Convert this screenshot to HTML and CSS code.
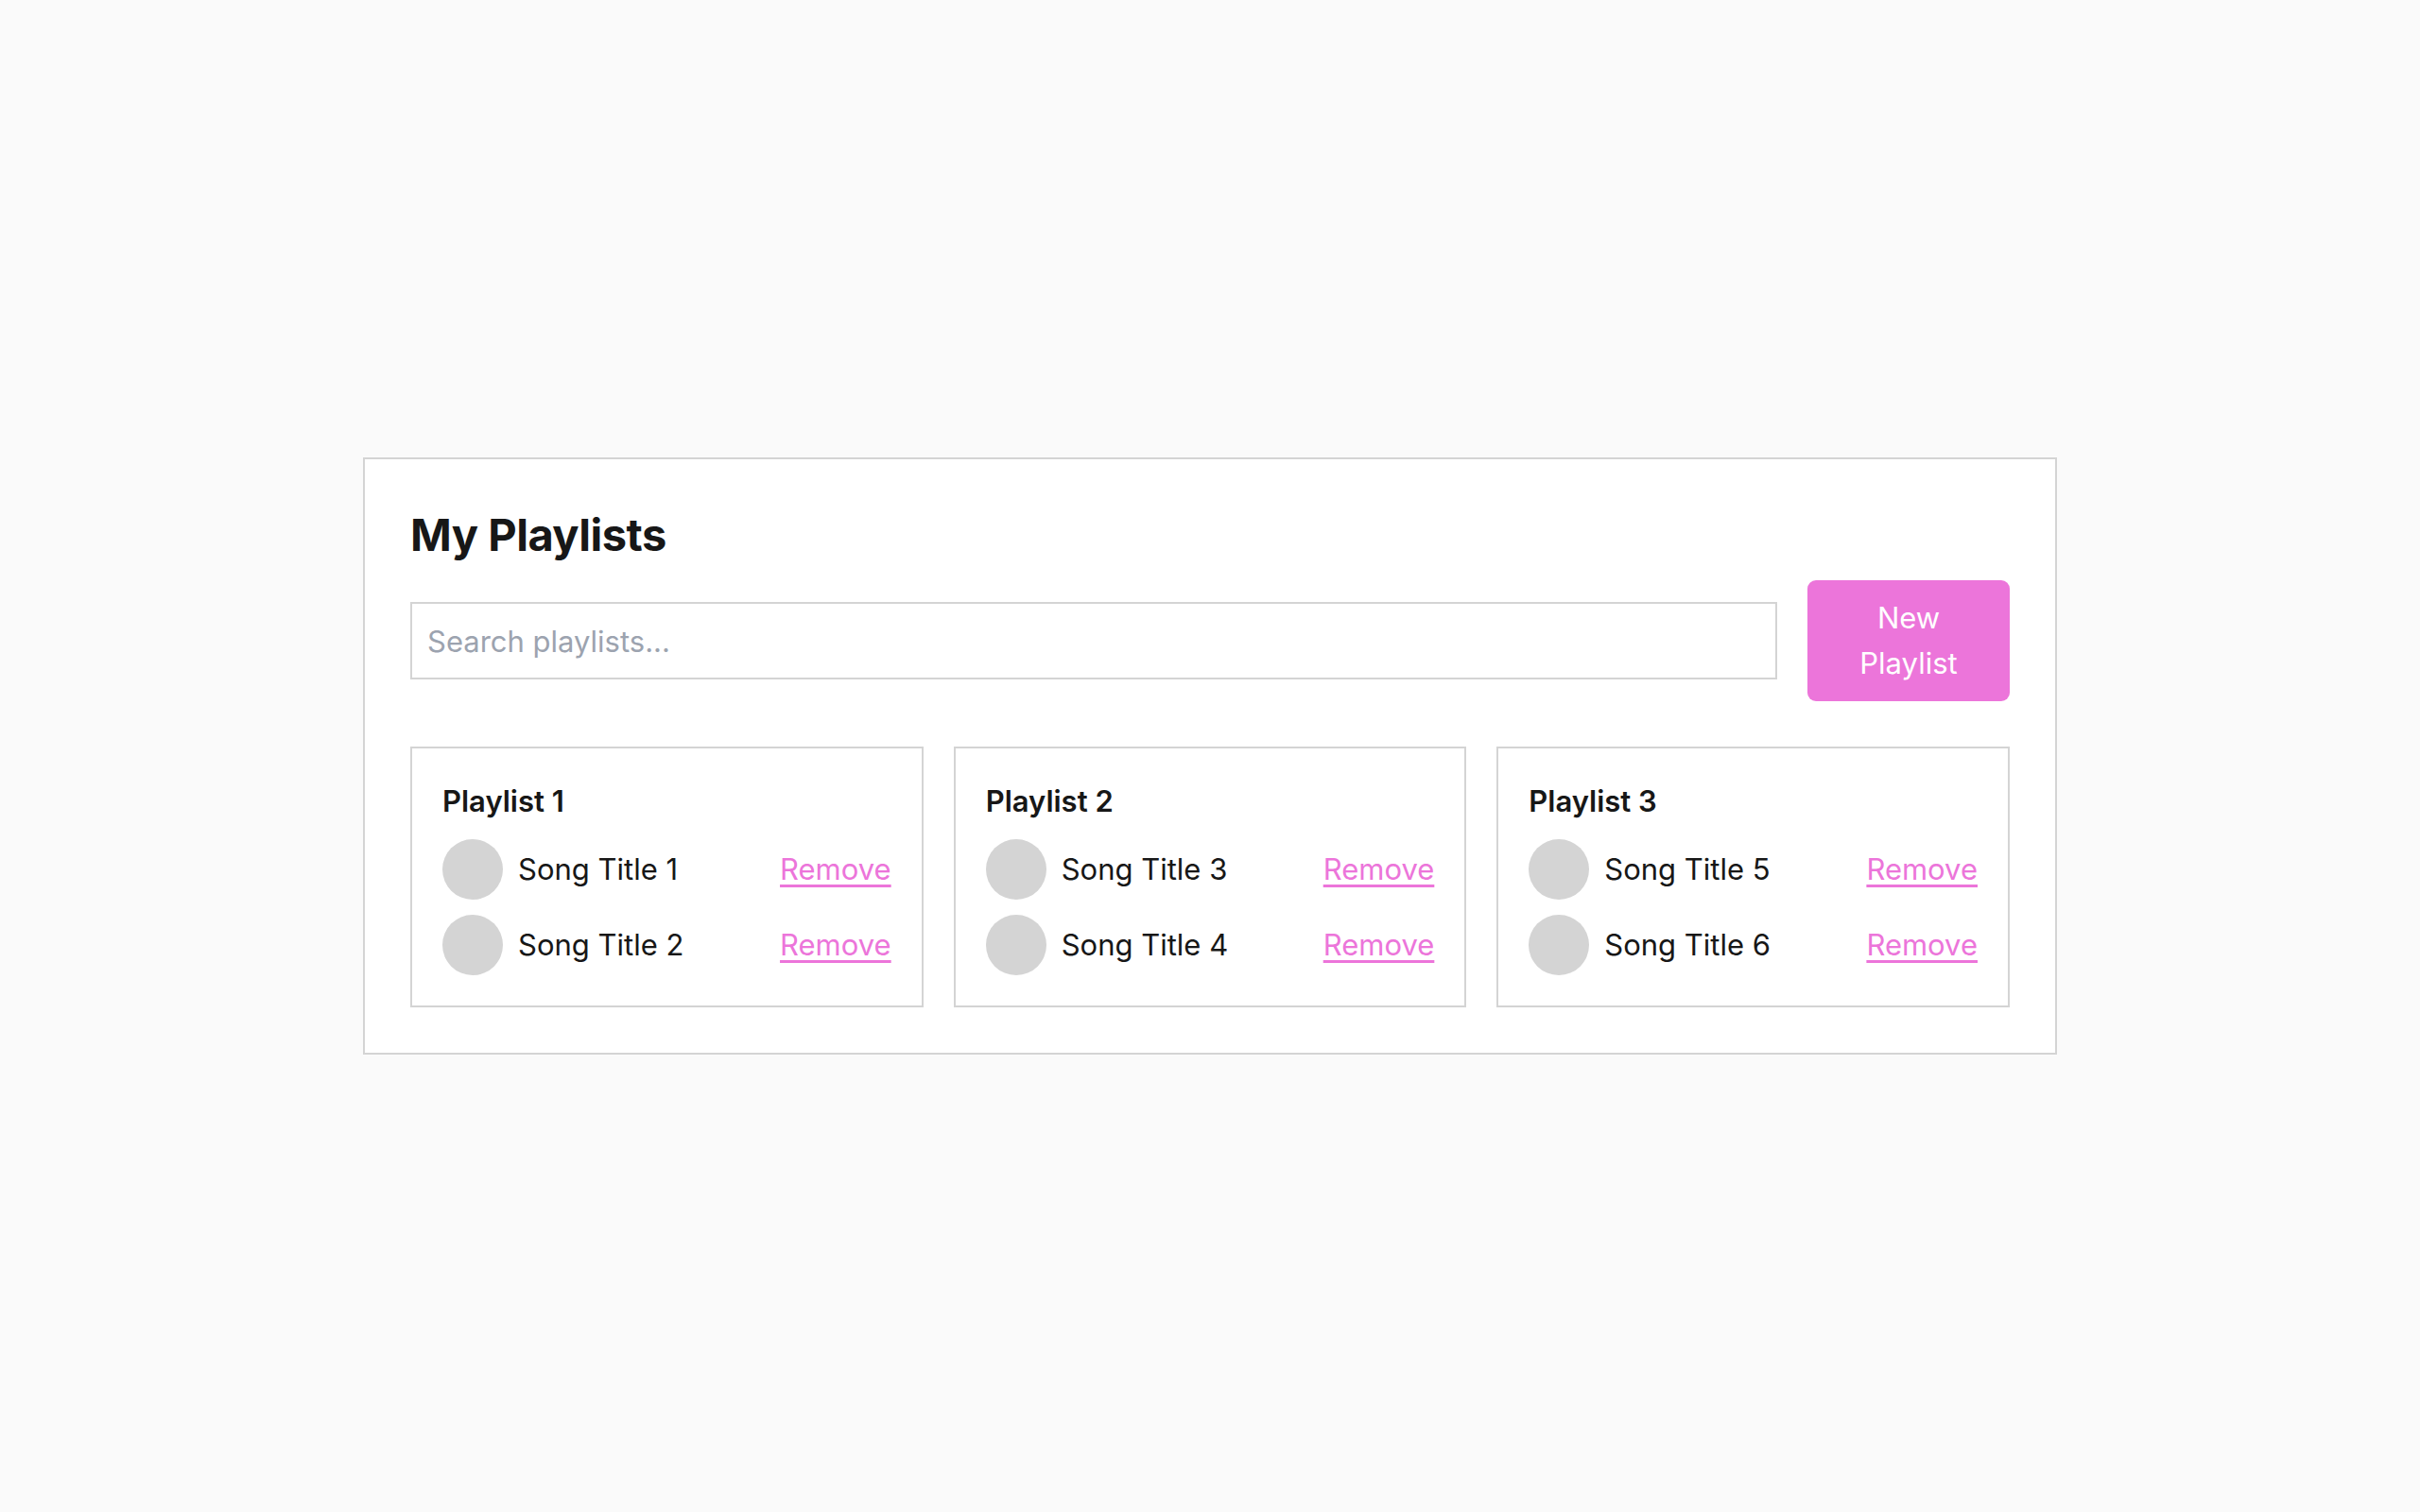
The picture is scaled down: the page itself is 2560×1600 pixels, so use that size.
FILE: index.html
```html
<!DOCTYPE html>
<html lang="en">
<head>
    <meta charset="UTF-8">
    <meta name="viewport" content="width=device-width, initial-scale=1.0">
    <title>My Playlists</title>
    <link rel="stylesheet" href="styles.css">
</head>
<body>
    <div class="panel">
        <h1>My Playlists</h1>

        <div class="toolbar">
            <input type="text" class="search" placeholder="Search playlists...">
            <button type="button" class="new-btn">New Playlist</button>
        </div>

        <div class="playlists">
            <div class="card">
                <h3>Playlist 1</h3>
                <div class="song">
                    <span class="cover"></span>
                    <span class="song-title">Song Title 1</span>
                    <a href="#" class="remove">Remove</a>
                </div>
                <div class="song">
                    <span class="cover"></span>
                    <span class="song-title">Song Title 2</span>
                    <a href="#" class="remove">Remove</a>
                </div>
            </div>
            <div class="card">
                <h3>Playlist 2</h3>
                <div class="song">
                    <span class="cover"></span>
                    <span class="song-title">Song Title 3</span>
                    <a href="#" class="remove">Remove</a>
                </div>
                <div class="song">
                    <span class="cover"></span>
                    <span class="song-title">Song Title 4</span>
                    <a href="#" class="remove">Remove</a>
                </div>
            </div>
            <div class="card">
                <h3>Playlist 3</h3>
                <div class="song">
                    <span class="cover"></span>
                    <span class="song-title">Song Title 5</span>
                    <a href="#" class="remove">Remove</a>
                </div>
                <div class="song">
                    <span class="cover"></span>
                    <span class="song-title">Song Title 6</span>
                    <a href="#" class="remove">Remove</a>
                </div>
            </div>
        </div>
    </div>
</body>
</html>
```

FILE: styles.css
```css
* {
    box-sizing: border-box;
}
body {
    font-family: Inter, "Noto Sans", sans-serif;
    margin: 0;
    padding: 0;
    min-height: 100vh;
    background-color: #fafafa;
    color: #171717;
    display: flex;
    align-items: center;
    justify-content: center;
}
.panel {
    width: 1792px;
    background-color: #fff;
    border: 2px solid #d4d4d4;
    padding: 48px;
}
h1 {
    font-size: 47px;
    line-height: 64px;
    font-weight: 700;
    letter-spacing: -0.5px;
    margin: 0 0 16px;
}
.toolbar {
    display: flex;
    align-items: center;
    gap: 32px;
    margin-bottom: 48px;
}
.search {
    flex: 1;
    height: 82px;
    padding: 0 16px;
    border: 2px solid #d4d4d4;
    border-radius: 0;
    font-family: inherit;
    font-size: 31px;
    color: #171717;
    outline: none;
}
.search::placeholder {
    color: #9ca3af;
}
.new-btn {
    width: 214px;
    padding: 16px 44px;
    background-color: #ec75da;
    color: #fff;
    border: none;
    border-radius: 9px;
    font-family: inherit;
    font-size: 31px;
    line-height: 48px;
    cursor: pointer;
}
.playlists {
    display: grid;
    grid-template-columns: repeat(3, 1fr);
    gap: 32px;
}
.card {
    border: 2px solid #d4d4d4;
    padding: 32px;
}
.card h3 {
    font-size: 31px;
    line-height: 48px;
    font-weight: 600;
    margin: 0 0 16px;
}
.song {
    display: flex;
    align-items: center;
    gap: 16px;
    margin-bottom: 16px;
}
.song:last-child {
    margin-bottom: 0;
}
.cover {
    width: 64px;
    height: 64px;
    border-radius: 50%;
    background-color: #d4d4d4;
    flex-shrink: 0;
}
.song-title {
    flex: 1;
    font-size: 31px;
    line-height: 48px;
}
.remove {
    font-size: 31px;
    line-height: 48px;
    color: #ec75da;
    text-decoration: underline;
    text-underline-offset: 5px;
}
```
